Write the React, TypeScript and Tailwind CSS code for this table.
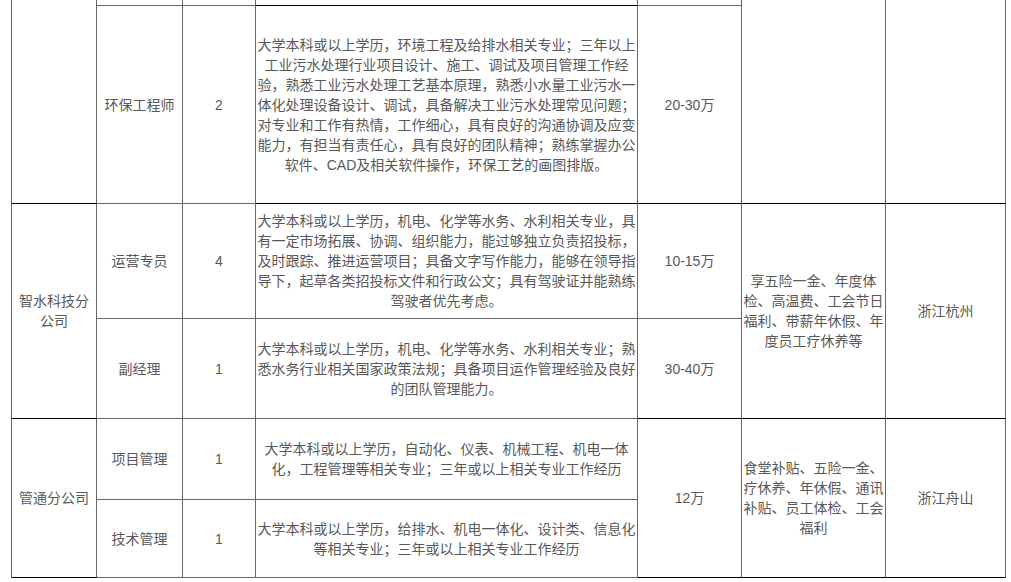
import React from 'react';

const G = 'border-[#666]';
const B = 'border-b-[#000]';

type CellProps = {
  lines?: string[];
  rowSpan?: number;
  black?: boolean;
  first?: boolean;
  pad?: string;
};

const Cell: React.FC<CellProps> = ({ lines = [], rowSpan, black, first, pad = 'px-[6px]' }) => (
  <td
    rowSpan={rowSpan}
    className={`border-r border-b ${first ? 'border-l' : ''} ${G} ${black ? B : ''} ${pad} py-0 align-middle text-center`}
  >
    {lines.map((l, i) => (
      <React.Fragment key={i}>
        {l}
        {i < lines.length - 1 && <br />}
      </React.Fragment>
    ))}
  </td>
);

export default function App() {
  return (
    <div className="w-[1011px] h-[582px] overflow-hidden bg-white pl-[11px]">
      <table
        className="table-fixed border-separate border-spacing-0 w-[995px] text-[14px] leading-[20px] text-[#595959]"
        style={{ fontFamily: '"Liberation Sans", "Noto Sans CJK SC", sans-serif' }}
      >
        <colgroup>
          <col className="w-[86px]" />
          <col className="w-[86px]" />
          <col className="w-[73px]" />
          <col className="w-[382px]" />
          <col className="w-[104px]" />
          <col className="w-[144px]" />
          <col className="w-[120px]" />
        </colgroup>
        <tbody>
          {/* partially scrolled row */}
          <tr className="h-[6px]">
            <Cell rowSpan={2} black first />
            <Cell />
            <Cell />
            <Cell black />
            <Cell />
            <Cell rowSpan={2} black />
            <Cell rowSpan={2} black />
          </tr>
          <tr className="h-[198px]">
            <Cell lines={['环保工程师']} />
            <Cell lines={['2']} />
            <Cell
              pad="px-[1px]"
              black
              lines={[
                '大学本科或以上学历，环境工程及给排水相关专业；三年以上',
                '工业污水处理行业项目设计、施工、调试及项目管理工作经',
                '验，熟悉工业污水处理工艺基本原理，熟悉小水量工业污水一',
                '体化处理设备设计、调试，具备解决工业污水处理常见问题；',
                '对专业和工作有热情，工作细心，具有良好的沟通协调及应变',
                '能力，有担当有责任心，具有良好的团队精神；熟练掌握办公',
                '软件、CAD及相关软件操作，环保工艺的画图排版。',
              ]}
            />
            <Cell lines={['20-30万']} black />
          </tr>

          <tr className="h-[115px]">
            <Cell rowSpan={2} black first lines={['智水科技分', '公司']} />
            <Cell lines={['运营专员']} />
            <Cell lines={['4']} />
            <Cell
              pad="px-[1px]"
              lines={[
                '大学本科或以上学历，机电、化学等水务、水利相关专业，具',
                '有一定市场拓展、协调、组织能力，能过够独立负责招投标，',
                '及时跟踪、推进运营项目；具备文字写作能力，能够在领导指',
                '导下，起草各类招投标文件和行政公文；具有驾驶证并能熟练',
                '驾驶者优先考虑。',
              ]}
            />
            <Cell lines={['10-15万']} />
            <Cell
              rowSpan={2}
              black
              pad="px-[1px]"
              lines={['享五险一金、年度体', '检、高温费、工会节日', '福利、带薪年休假、年', '度员工疗休养等']}
            />
            <Cell rowSpan={2} black lines={['浙江杭州']} />
          </tr>
          <tr className="h-[100px]">
            <Cell lines={['副经理']} />
            <Cell lines={['1']} />
            <Cell
              pad="px-[1px]"
              lines={[
                '大学本科或以上学历，机电、化学等水务、水利相关专业；熟',
                '悉水务行业相关国家政策法规；具备项目运作管理经验及良好',
                '的团队管理能力。',
              ]}
            />
            <Cell lines={['30-40万']} black />
          </tr>

          <tr className="h-[81px]">
            <Cell rowSpan={2} black first lines={['管通分公司']} />
            <Cell lines={['项目管理']} />
            <Cell lines={['1']} />
            <Cell
              pad="px-[1px]"
              lines={[
                '大学本科或以上学历，自动化、仪表、机械工程、机电一体',
                '化，工程管理等相关专业；三年或以上相关专业工作经历',
              ]}
            />
            <Cell rowSpan={2} black lines={['12万']} />
            <Cell
              rowSpan={2}
              black
              pad="px-[1px]"
              lines={['食堂补贴、五险一金、', '疗休养、年休假、通讯', '补贴、员工体检、工会', '福利']}
            />
            <Cell rowSpan={2} black lines={['浙江舟山']} />
          </tr>
          <tr className="h-[78px]">
            <Cell lines={['技术管理']} />
            <Cell lines={['1']} />
            <Cell
              pad="px-[1px]"
              lines={[
                '大学本科或以上学历，给排水、机电一体化、设计类、信息化',
                '等相关专业；三年或以上相关专业工作经历',
              ]}
            />
          </tr>
        </tbody>
      </table>
    </div>
  );
}
